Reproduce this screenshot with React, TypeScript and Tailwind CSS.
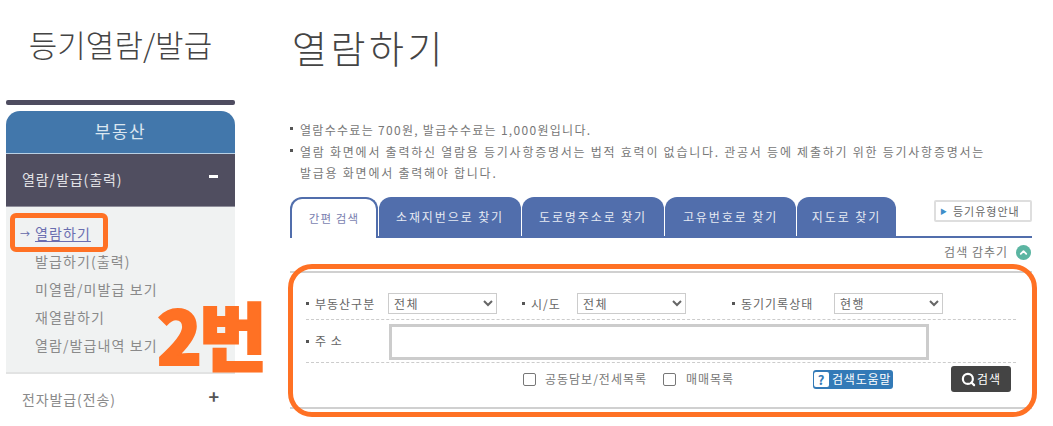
import { ChevronUp, Search } from 'lucide-react'

const font = "font-['Noto_Sans_CJK_KR','Noto_Sans',sans-serif]"

const menuItems = ['발급하기(출력)', '미열람/미발급 보기', '재열람하기', '열람/발급내역 보기']
const tabs = [
	{ label: '소재지번으로 찾기', width: 'w-[142px]' },
	{ label: '도로명주소로 찾기', width: 'w-[142px]' },
	{ label: '고유번호로 찾기', width: 'w-[131px]' },
	{ label: '지도로 찾기', width: 'w-[99px]' },
]

function Sidebar() {
	return (
		<aside className="ml-[6px] w-[229px] shrink-0">
			<h2 className="flex h-[100px] items-start justify-center pt-[22px] text-[31px] font-light leading-[44px] text-[#444]">
				등기열람/발급
			</h2>
			<div className="h-[5px] rounded-[2px] bg-[#4e4c60]" />
			<div className="mt-[6px] flex h-[43px] items-center justify-center rounded-t-[14px] border-b border-[#b9d0e4] bg-[#4277ab] pb-[3px] text-[17px] tracking-[1.5px] text-[#dbe6f0]">
				부동산
			</div>
			<div className="flex h-[53px] items-center justify-between border-b border-[#8f8e9b] bg-[#504e60] pb-[2px] pl-[16px] pr-[17px] text-[14px] tracking-[0.9px] text-[#e2e2e6]">
				<span>열람/발급(출력)</span>
				<span className="mb-[6px] h-[3px] w-[9px] bg-white" />
			</div>
			<ul className="h-[167px] border-b-2 border-[#e2e3e3] bg-[#f0f2f2] pl-[14px] pt-[12px] text-[14px] leading-[28px] tracking-[1.1px] text-[#8a8a8a]">
				<li className="flex h-[28px] items-center">
					<span className="mt-[2px] w-[15px] text-[10px] text-[#6468a8]">→</span>
					<span className="text-[#6a6eb0] underline underline-offset-2">열람하기</span>
				</li>
				{menuItems.map((item) => (
					<li key={item} className="h-[28px] pl-[15px]">
						{item}
					</li>
				))}
			</ul>
			<div className="flex h-[53px] items-center justify-between pb-[2px] pl-[16px] pr-[15px] text-[14px] tracking-[0.9px] text-[#8a8a8a]">
				<span>전자발급(전송)</span>
				<span className="mb-[8px] text-[18px] font-bold leading-none text-[#555]">+</span>
			</div>
		</aside>
	)
}

function Tabs() {
	return (
		<div className="flex h-[41px] items-end border-b-2 border-[#516eac]">
			<div className="-mb-[2px] flex h-[41px] w-[88px] items-center justify-center rounded-t-[12px] border-2 border-b-0 border-[#516eac] bg-white text-[11.5px] tracking-[1.1px] text-[#7b7fb0]">
				간편 검색
			</div>
			{tabs.map((tab) => (
				<div
					key={tab.label}
					className={`ml-[1px] flex h-[39px] items-center justify-center rounded-t-[12px] bg-[#516eac] text-[12px] tracking-[1.9px] text-[#e6eaf3] ${tab.width}`}
				>
					{tab.label}
				</div>
			))}
			<div className="mb-[14px] ml-auto flex h-[22px] w-[98px] items-center gap-[5px] rounded-[2px] border-2 border-[#dedede] pl-[4px] text-[11px] tracking-[1px] text-[#666]">
				<span className="text-[7px] text-[#3f8ec8]">▶</span>
				등기유형안내
			</div>
		</div>
	)
}

function Field({ label, labelWidth, value }: { label: string; labelWidth: string; value: string }) {
	return (
		<div className="flex items-center">
			<span className={`flex items-center gap-[6px] text-[12px] tracking-[1px] text-[#666] ${labelWidth}`}>
				<span className="h-[3px] w-[3px] bg-[#555]" />
				{label}
			</span>
			<select
				defaultValue={value}
				className="h-[21px] w-[109px] border border-[#ccc] bg-white pl-[1px] text-[12px] tracking-[1.5px] text-[#666]"
			>
				<option>{value}</option>
			</select>
		</div>
	)
}

function SearchBox() {
	return (
		<div className="mt-[5px] h-[138px] border-y-2 border-[#d0d0d0] px-[16px]">
			<div className="flex h-[47px] items-end gap-[25px] border-b border-dashed border-[#ccc] pb-[5px]">
				<Field label="부동산구분" labelWidth="w-[82px]" value="전체" />
				<Field label="시/도" labelWidth="w-[55px]" value="전체" />
				<div className="ml-[21px]">
					<Field label="동기기록상태" labelWidth="w-[102px]" value="현행" />
				</div>
			</div>
			<div className="flex h-[43px] items-start border-b border-dashed border-[#ccc] pt-[4px]">
				<span className="mt-[8px] flex w-[83px] items-center gap-[6px] text-[12px] tracking-[1px] text-[#666]">
					<span className="h-[3px] w-[3px] bg-[#555]" />
					주 소
				</span>
				<input className="h-[36px] w-[540px] border-[3px] border-[#ccc] bg-white" />
			</div>
			<div className="flex h-[32px] items-center pl-[217px] text-[12px] tracking-[1px] text-[#777]">
				<span className="h-[13px] w-[13px] rounded-[2px] border border-[#777] bg-white" />
				<span className="ml-[9px] w-[118px]">공동담보/전세목록</span>
				<span className="h-[13px] w-[13px] rounded-[2px] border border-[#777] bg-white" />
				<span className="ml-[10px] w-[127px]">매매목록</span>
				<span className="flex h-[19px] w-[80px] items-center gap-[3px] rounded-[3px] bg-[#337ab7] pl-[1px] text-[12px] tracking-[0.8px] text-white">
					<span className="flex h-[15px] w-[15px] items-center justify-center rounded-[2px] bg-white text-[13px] font-bold leading-none text-[#337ab7]">
						?
					</span>
					검색도움말
				</span>
				<span className="ml-[58px] flex h-[26px] w-[60px] items-center justify-center gap-[1px] rounded-[3px] bg-[#444] text-[12px] text-white">
					<Search size={15} strokeWidth={3.5} />
					검색
				</span>
			</div>
		</div>
	)
}

export default function App() {
	return (
		<div className={`relative flex h-[426px] w-[1053px] overflow-hidden bg-white ${font}`}>
			<Sidebar />
			<main className="ml-[55px] w-[742px] shrink-0">
				<h1 className="pl-[2px] pt-[20px] text-[38px] font-light leading-[54px] tracking-[3.5px] text-[#444]">
					열람하기
				</h1>
				<ul className="mt-[45px] h-[78px] text-[12px] leading-[21.5px] tracking-[1.75px] text-[#777]">
					<li className="relative pl-[10px] tracking-[1.3px] before:absolute before:left-0 before:top-[8px] before:h-[3px] before:w-[3px] before:bg-[#555]">
						열람수수료는 700원, 발급수수료는 1,000원입니다.
					</li>
					<li className="relative pl-[10px] before:absolute before:left-0 before:top-[8px] before:h-[3px] before:w-[3px] before:bg-[#555]">
						열람 화면에서 출력하신 열람용 등기사항증명서는 법적 효력이 없습니다. 관공서 등에 제출하기 위한 등기사항증명서는
						<br />
						발급용 화면에서 출력해야 합니다.
					</li>
				</ul>
				<Tabs />
				<div className="flex h-[28px] items-center justify-end gap-[8px] pr-[1px] text-[12px] tracking-[1px] text-[#777]">
					검색 감추기
					<span className="flex h-[15px] w-[15px] items-center justify-center rounded-full bg-[#5bb5a2] text-white">
						<ChevronUp size={11} strokeWidth={4} />
					</span>
				</div>
				<SearchBox />
			</main>
			{/* annotations drawn over the screenshot */}
			<div className="absolute left-[10px] top-[213px] h-[39px] w-[98px] rounded-[6px] border-[5px] border-[#ff7124]" />
			<div className="absolute left-[288px] top-[264px] h-[153px] w-[749px] rounded-[24px] border-[5px] border-[#ff7124]" />
			<div className="absolute left-[157px] top-[298px] text-[74px] font-black leading-[70px] tracking-[-3px] text-[#ff7124] [-webkit-text-stroke:2px_#ff7124]">
				2번
			</div>
		</div>
	)
}
